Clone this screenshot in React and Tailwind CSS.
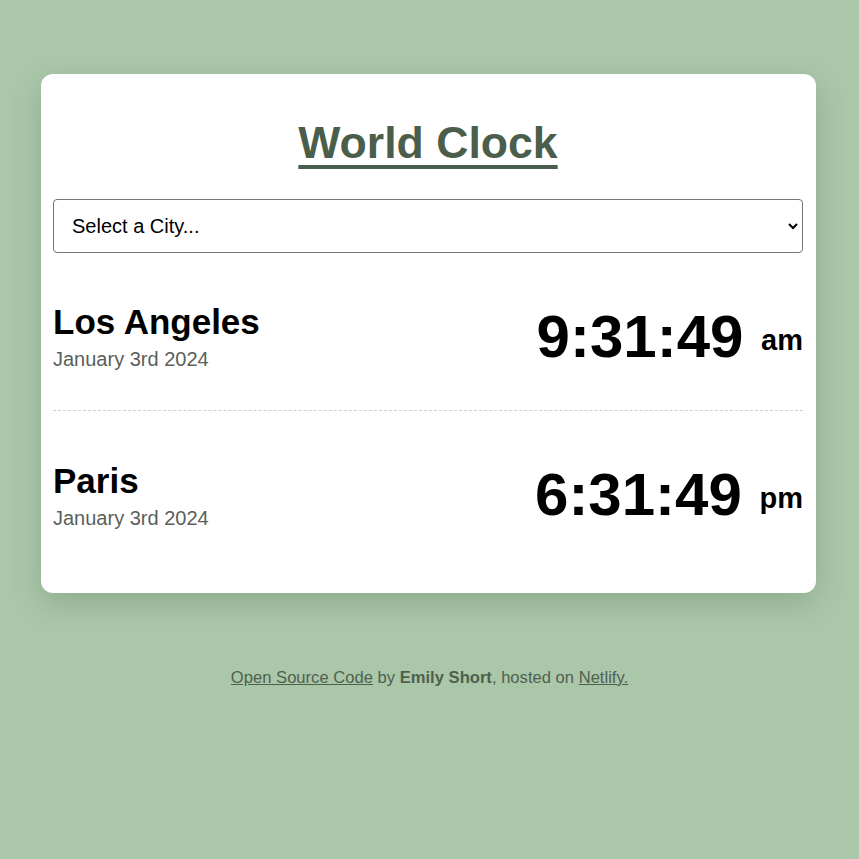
const cities = [
  { name: "Los Angeles", date: "January 3rd 2024", time: "9:31:49", ampm: "am" },
  { name: "Paris", date: "January 3rd 2024", time: "6:31:49", ampm: "pm" },
];

export default function App() {
  return (
    <div className="min-h-screen bg-[#abc7aa] pt-[74px] font-['Liberation_Sans',Arial,sans-serif]">
      {/* CARD */}
      <div className="ml-[41px] w-[775px] rounded-xl bg-white pl-3 pr-[13px] pt-[43px] pb-[14px] shadow-[0_10px_30px_rgba(60,90,60,0.25)]">
        <h1 className="text-center text-[44.6px] leading-[52px] font-bold text-[#4a5e4b] underline decoration-[4px] underline-offset-[7px]">
          World Clock
        </h1>

        <div className="relative mt-[30px]">
          <select className="h-[54px] w-full appearance-none rounded-[4px] border border-[#767676] bg-white pl-[18px] text-[20px] text-black">
            <option>Select a City...</option>
          </select>
          <svg
            className="pointer-events-none absolute right-[4px] top-[22px]"
            width="12"
            height="10"
            viewBox="0 0 12 10"
          >
            <path d="M2 3l4 4 4-4" fill="none" stroke="#000" strokeWidth="2" />
          </svg>
        </div>

        {/* CITIES */}
        {cities.map((c, i) => (
          <div
            key={c.name}
            className={`mb-[10px] flex h-[148px] items-center justify-between mt-[10px] ${
              i < cities.length - 1 ? "border-b border-dashed border-[#cfcfcf]" : ""
            }`}
          >
            <div>
              <div className="text-[35px] leading-[40px] font-bold text-black">{c.name}</div>
              <div className="mt-1.5 text-[20px] leading-[23px] text-[#5a5f5a]">{c.date}</div>
            </div>
            <div className="text-[60px] font-bold text-black">
              {c.time} <span className="ml-[1px] align-[7px] text-[29px]">{c.ampm}</span>
            </div>
          </div>
        ))}
      </div>

      {/* FOOTER */}
      <div className="mt-[73px] text-center text-[16.6px] text-[#4f604f]">
        <a href="#" className="underline">
          Open Source Code
        </a>{" "}
        by <strong>Emily Short</strong>, hosted on{" "}
        <a href="#" className="underline">
          Netlify.
        </a>
      </div>
    </div>
  );
}
